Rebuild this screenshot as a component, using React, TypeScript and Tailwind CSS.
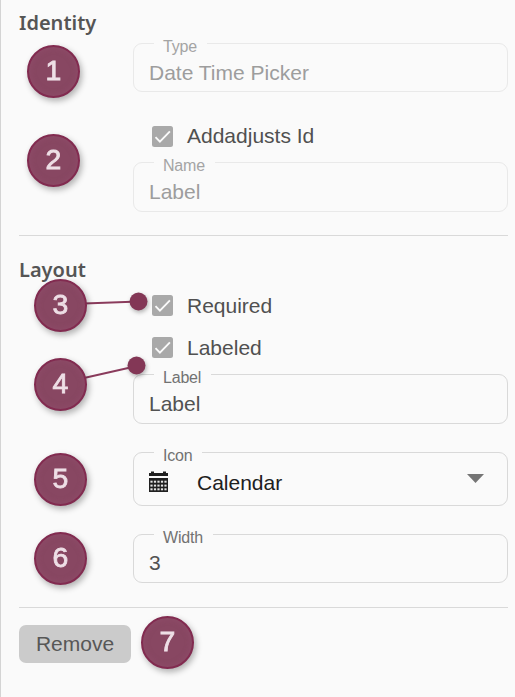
import type { ReactNode } from "react";

function Legend({ children, tone }: { children: ReactNode; tone: string }) {
  return (
    <span className={`absolute -top-[7px] left-[20px] bg-[#fafafa] pt-px pr-[10px] pl-[9px] text-[16px] leading-[18px] tracking-[-0.2px] ${tone}`}>
      {children}
    </span>
  );
}

function Field({ label, value, size, disabled = false }: { label: string; value: string; size: string; disabled?: boolean }) {
  return (
    <div className={`relative ml-[114px] flex w-[375px] items-center rounded-[9px] border pl-[15px] ${size} ${disabled ? "border-[#e9e9e9]" : "border-[#d9d9d9]"}`}>
      <Legend tone={disabled ? "text-[#a4a4a4]" : "text-[#727272]"}>{label}</Legend>
      <span className={`text-[21px] leading-6 ${disabled ? "text-[#9d9d9d]" : "text-[#525252]"}`}>{value}</span>
    </div>
  );
}

function Check({ children }: { children: ReactNode }) {
  return (
    <label className="ml-[133px] flex h-[21px] items-center gap-[14px] text-[21px] leading-[21px] text-[#505050]">
      <svg className="h-[21px] w-[21px] shrink-0" viewBox="0 0 21 21">
        <rect width="21" height="21" rx="2.5" fill="#a9a9a9" />
        <path d="M3.5 11.1 L7.9 15.6 L17.9 5.4" fill="none" stroke="#fafafa" strokeWidth="1.9" />
      </svg>
      <span>{children}</span>
    </label>
  );
}

function CalendarIcon() {
  return (
    <svg className="h-[21px] w-[19px]" viewBox="0 0 19 21">
      <path d="M0 2 H2 V0.5 H5 V2 H14 V0.5 H17 V2 H19 V5 H0 Z" fill="#202020" />
      <path d="M0 7 H19 V21 H0 Z" fill="#202020" />
      <g fill="#e4e4e4">
        {[9.7, 13.6, 17.3].map((y) =>
          [1.4, 4.9, 8.4, 11.9, 15.4].map((x) => <rect key={`${x}-${y}`} x={x} y={y} width="2.2" height="2" />),
        )}
      </g>
    </svg>
  );
}

function Badge({ n, place }: { n: number; place: string }) {
  return (
    <div className={`absolute flex h-[53px] w-[53px] items-center justify-center rounded-full border-2 border-[#822b50] bg-[#884762] text-[27px] leading-none text-[#eedfe6] shadow-[2px_3px_6px_rgba(0,0,0,0.3),inset_0_0_6px_rgba(150,82,113,0.55)] [-webkit-text-stroke:0.8px_#eedfe6] ${place}`}>
      <span className="-mt-px scale-x-105">{n}</span>
    </div>
  );
}

const heading = "font-['Noto_Sans',sans-serif] text-[20px] leading-6 font-semibold tracking-[0px] text-[#555]";

export default function App() {
  return (
    <main className="relative h-[697px] w-[515px] overflow-hidden border-l border-[#d4d4d4] bg-[#fafafa] pt-[11px] pr-[7px] pl-[18px] font-['Liberation_Sans',Arial,sans-serif]">
      <h2 className={heading}>Identity</h2>
      <div className="mt-[8px]">
        <Field label="Type" value="Date Time Picker" size="h-[49px] pt-[13px] pb-0.5" disabled />
      </div>
      <div className="mt-[34px] [&_span]:-mt-0.5">
        <Check>Addadjusts Id</Check>
      </div>
      <div className="mt-[15px]">
        <Field label="Name" value="Label" size="h-[50px] pt-[12px] pb-[3px]" disabled />
      </div>
      <hr className="mt-[23px] border-[#d9d9d9]" />
      <h2 className={`mt-[22px] ${heading}`}>Layout</h2>
      <div className="mt-[13px] flex flex-col gap-[21px]">
        <Check>Required</Check>
        <Check>Labeled</Check>
      </div>
      <div className="mt-[16px] flex flex-col gap-[28px]">
        <Field label="Label" value="Label" size="h-[50px] pt-[12px] pb-[3px]" />
        <div className="relative ml-[114px] flex h-[54px] w-[375px] items-center rounded-[9px] border border-[#d9d9d9] pt-[5px] pl-[15px] text-[21px] text-[#202020]">
          <Legend tone="text-[#727272]">Icon</Legend>
          <CalendarIcon />
          <span className="mt-[3px] ml-[29px] leading-6">Calendar</span>
          <svg className="mr-[23px] mb-[6px] ml-auto h-[9px] w-[17px]" viewBox="0 0 17 9">
            <path d="M0 0H17L8.5 9Z" fill="#757575" />
          </svg>
        </div>
        <Field label="Width" value="3" size="h-[49px] pt-[12px] pb-[3px]" />
      </div>
      <hr className="mt-[24px] border-[#d9d9d9]" />
      <button className="mt-[17px] h-[38px] w-[112px] rounded-[7px] bg-[#cbcbcb] text-[21px] text-[#575757]">Remove</button>

      <svg className="absolute top-0 -left-px h-[697px] w-[515px]" viewBox="0 0 515 697">
        <path d="M84 303.5 L139 301.5 M84 378 L137 366" stroke="#8a3b5c" strokeWidth="1.8" />
        <g fill="#833756" className="drop-shadow-[1px_2px_2px_rgba(0,0,0,0.3)]">
          <circle cx="138.5" cy="301.5" r="9" />
          <circle cx="136.5" cy="365.5" r="9" />
        </g>
      </svg>
      <Badge n={1} place="top-[45px] left-[26px]" />
      <Badge n={2} place="top-[134px] left-[26px]" />
      <Badge n={3} place="top-[279px] left-[33px]" />
      <Badge n={4} place="top-[358px] left-[33px]" />
      <Badge n={5} place="top-[453px] left-[33px]" />
      <Badge n={6} place="top-[532px] left-[33px]" />
      <Badge n={7} place="top-[616px] left-[140px]" />
    </main>
  );
}
